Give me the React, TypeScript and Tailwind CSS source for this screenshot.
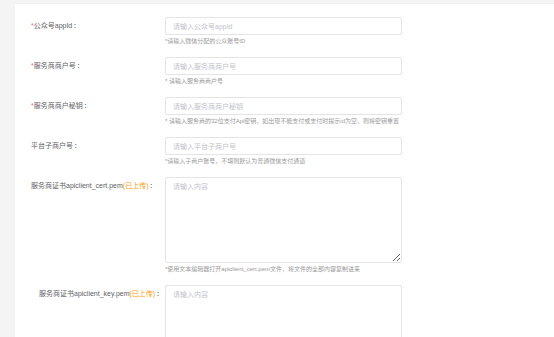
import React from "react";

const font = { fontFamily: '"Liberation Sans", "Noto Sans CJK SC", sans-serif' };

function Label({ req, children, extra, pl = "pl-[16px]" }: { req?: boolean; children: React.ReactNode; extra?: boolean; pl?: string }) {
  return (
    <div className={`w-[150px] shrink-0 h-[18px] flex items-center ${pl} text-[7px] text-[#606266] whitespace-nowrap`}>
      {req && <span className="text-[#f56c6c]">*</span>}
      <span>{children}</span>
      {extra && <span className="text-[#ff9900]">(已上传)</span>}
      <span className="ml-[1px]">：</span>
    </div>
  );
}

function Help({ children }: { children: React.ReactNode }) {
  return <div className="h-[12px] flex items-center text-[6px] text-[#999] whitespace-nowrap">{children}</div>;
}

function InputRow({ label, req, placeholder, help }: { label: string; req?: boolean; placeholder: string; help: string }) {
  return (
    <div className="flex mb-[10px]">
      <Label req={req}>{label}</Label>
      <div className="flex flex-col">
        <input
          placeholder={placeholder}
          className="w-[237px] h-[18px] border border-[#e4e4e4] rounded-[2px] px-[7px] text-[7px] outline-none placeholder:text-[#c0c4cc] bg-white"
          style={font}
        />
        <Help>{help}</Help>
      </div>
    </div>
  );
}

export default function App() {
  return (
    <div className="w-full h-[337px] overflow-hidden bg-[#f4f4f4] pl-[15px] pt-[3px]" style={font}>
      <div className="bg-white h-full border-t border-[#efefef] pt-[13px]">
        <InputRow req label="公众号appId" placeholder="请输入公众号appId" help="*请输入微信分配的公众账号ID" />
        <InputRow req label="服务商商户号" placeholder="请输入服务商商户号" help="* 请输入服务商商户号" />
        <InputRow
          req
          label="服务商商户秘钥"
          placeholder="请输入服务商商户秘钥"
          help="* 请输入服务商的32位支付Api密钥，如出现不能支付或支付时提示id为空，则将密钥重置"
        />
        <InputRow label="平台子商户号" placeholder="请输入平台子商户号" help="*请输入子商户账号，不填则默认为普通微信支付通道" />
        <div className="flex mb-[10px]">
          <Label extra>服务商证书apiclient_cert.pem</Label>
          <div className="flex flex-col">
            <textarea
              placeholder="请输入内容"
              className="w-[237px] h-[86px] border border-[#e4e4e4] rounded-[2px] px-[7px] py-[4px] text-[7px] outline-none placeholder:text-[#c0c4cc] bg-white block"
              style={font}
            />
            <Help>*使用文本编辑器打开apiclient_cert.pem文件，将文件的全部内容复制进来</Help>
          </div>
        </div>
        <div className="flex">
          <Label extra pl="pl-[24px]">服务商证书apiclient_key.pem</Label>
          <div className="flex flex-col">
            <textarea
              placeholder="请输入内容"
              className="w-[237px] h-[86px] border border-[#e4e4e4] rounded-[2px] px-[7px] py-[4px] text-[7px] outline-none placeholder:text-[#c0c4cc] bg-white block"
              style={font}
            />
          </div>
        </div>
      </div>
    </div>
  );
}
